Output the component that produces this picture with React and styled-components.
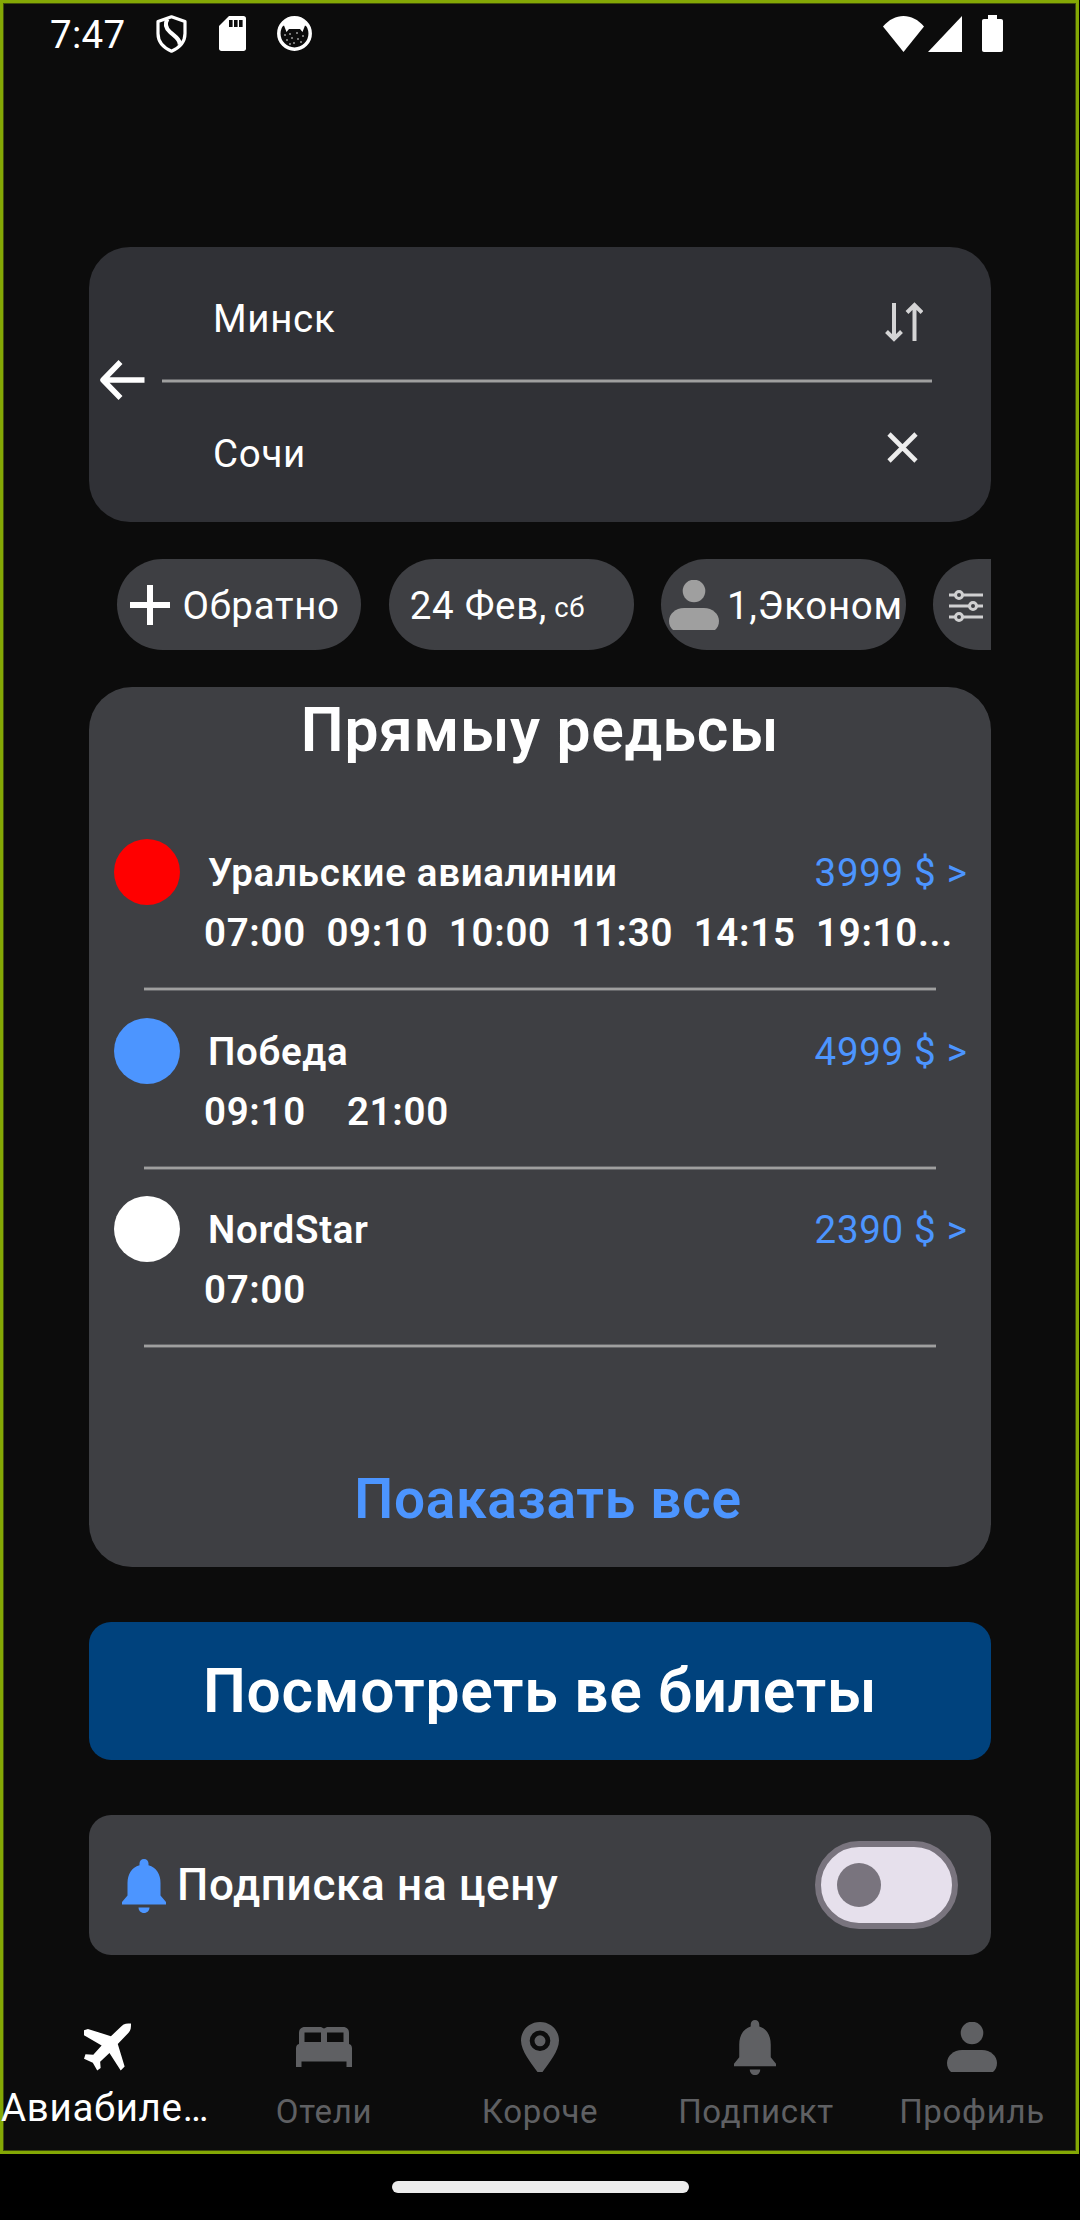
import React from "react";
import styled, { createGlobalStyle } from "styled-components";

const Global = createGlobalStyle`
  * { box-sizing: border-box; }
  body { margin: 0; background: #000; font-family: Roboto, "Noto Sans", sans-serif; color: #fff; }
  svg { display: block; flex: none; }
`;

const Phone = styled.div`
  width: 1080px;
  height: 2220px;
  background: #000;
  overflow: hidden;
  letter-spacing: 0.6875px;
`;

const Screen = styled.div`
  width: 1079px;
  height: 2154px;
  background: #0c0c0c;
  box-shadow: inset 0 0 0 3px #84a805, inset 0 0 0 4px #3f4c0b;
  display: flex;
  flex-direction: column;
`;

const StatusBar = styled.header`
  height: 67px;
  padding: 0 76px 0 50px;
  display: flex;
  align-items: center;
  justify-content: space-between;
`;

const StatusGroup = styled.div`
  display: flex;
  align-items: center;
  gap: ${(p) => p.$gap}px;
`;

const Clock = styled.span`
  width: 75px;
  font-size: 38.5px;
  line-height: 44px;
  padding-top: 2px;
  letter-spacing: 0.3px;
`;

const Content = styled.main`
  width: 902px;
  margin: 180px 0 0 89px;
  display: flex;
  flex-direction: column;
`;

const SearchCard = styled.section`
  height: 275px;
  border-radius: 41px;
  background: #303136;
  display: grid;
  grid-template-columns: 73px 770px;
`;

const BackButton = styled.div`
  display: flex;
  align-items: center;
  padding: 0 0 10px 11px;
`;

const Fields = styled.div`
  display: flex;
  flex-direction: column;
`;

const Field = styled.div`
  height: ${(p) => p.$height}px;
  padding: ${(p) => p.$top}px 9px 0 51px;
  display: flex;
  align-items: center;
  justify-content: space-between;
  font-size: 38.5px;
  line-height: 66px;
`;

const SwapIcon = styled.svg`
  margin-top: 6px;
`;

const ClearIcon = styled.svg`
  margin: 0 5px 12px 0;
`;

const Line = styled.div`
  height: 4px;
  flex: none;
  width: ${(p) => p.$width || 770}px;
  background: #9f9f9f;
  border: solid #66676a;
  border-width: 1px 0;
`;

const Chips = styled.div`
  height: 91px;
  margin-top: 37px;
  padding-left: 27.5px;
  display: flex;
  gap: 27.5px;
  overflow: hidden;
`;

const Chip = styled.div`
  flex: 0 0 244.75px;
  height: 91px;
  border-radius: 46px;
  background: #3e3f43;
  padding: 1px 0 0 ${(p) => p.$left}px;
  display: flex;
  align-items: center;
  white-space: nowrap;
  font-size: 38.5px;
  gap: ${(p) => p.$gap || 0}px;
`;

const Weekday = styled.small`
  font-size: 27.5px;
  padding-top: 4px;
`;

const Tint = styled.span`
  color: ${(p) => p.$color};
  padding-top: ${(p) => p.$drop || 0}px;
`;

const Panel = styled.section`
  height: 880px;
  margin-top: 37px;
  border-radius: 43px;
  background: #3e3f43;
  display: flex;
  flex-direction: column;
`;

const Title = styled.h1`
  margin: 0;
  padding-top: 11px;
  height: 152px;
  text-align: center;
  font-size: 60.5px;
  line-height: 66px;
  font-weight: 600;
`;

const Flight = styled.article`
  height: 178.7px;
  display: flex;
  flex-direction: column;
`;

const FlightHead = styled.div`
  height: 66px;
  padding: 0 23.5px 0 25px;
  display: flex;
  align-items: center;
  font-size: 38.5px;
`;

const Dot = styled.span`
  width: 66px;
  height: 66px;
  border-radius: 50%;
  background: ${(p) => p.$color};
`;

const Airline = styled.strong`
  flex: 1;
  margin-left: 28px;
  padding-top: 1px;
  font-weight: 600;
`;

const Price = styled.span`
  padding-top: 1px;
  color: #4c95ff;
`;

const Times = styled.div`
  padding-left: 115px;
  height: 56px;
  margin-bottom: 26px;
  line-height: 56px;
  font-size: 38.5px;
  font-weight: 600;
  white-space: pre;
`;

const Divider = styled(Line)`
  margin-left: 55px;
`;

const ShowAll = styled.div`
  margin-top: 91.2px;
  padding-left: 16px;
  text-align: center;
  font-size: 55px;
  line-height: 66px;
  font-weight: 600;
  color: #4c95ff;
`;

const TicketsButton = styled.button`
  height: 138px;
  margin-top: 55px;
  padding: 2px 0 0;
  border: 0;
  border-radius: 22px;
  background: #00427d;
  color: #fff;
  font: 600 60.5px/66px Roboto, "Noto Sans", sans-serif;
  letter-spacing: 0.6875px;
`;

const Subscribe = styled.section`
  height: 140px;
  margin-top: 55px;
  border-radius: 22px;
  background: #3e3f43;
  padding: 0 33px;
  display: flex;
  align-items: center;
`;

const SubscribeLabel = styled.span`
  flex: 1;
  margin-left: 11px;
  font-size: 44px;
  font-weight: 500;
`;

const Switch = styled.span`
  width: 143px;
  height: 88px;
  border-radius: 44px;
  border: 6px solid #79747e;
  background: #e6e0ec;
  padding-left: 16px;
  display: flex;
  align-items: center;
`;

const Thumb = styled.span`
  width: 44px;
  height: 44px;
  border-radius: 50%;
  background: #79747e;
`;

const NavBar = styled.nav`
  width: 1080px;
  margin-top: 57px;
  display: flex;
`;

const NavItem = styled.div`
  width: 216px;
  flex: none;
  display: flex;
  flex-direction: column;
  align-items: center;
  color: ${(p) => (p.$active ? "#fff" : "#5f6063")};
  font-size: ${(p) => (p.$active ? 38.5 : 33)}px;
`;

const NavIcon = styled.div`
  height: 70px;
  display: flex;
  align-items: center;
  padding-right: ${(p) => p.$nudge || 0}px;
`;

const NavLabel = styled.span`
  line-height: 44px;
  width: 216px;
  text-align: ${(p) => (p.$active ? "left" : "center")};
  padding-left: ${(p) => (p.$active ? 1 : 0)}px;
  margin-top: ${(p) => (p.$active ? 4 : 8)}px;
`;

const HomeArea = styled.footer`
  height: 66px;
  display: flex;
  justify-content: center;
  padding-top: 27px;
`;

const HomeBar = styled.span`
  width: 297px;
  height: 12px;
  border-radius: 6px;
  background: #ececec;
`;

const BellIcon = ({ width, height }) => (
  <svg width={width} height={height} viewBox="0 0 44 54" preserveAspectRatio="none" fill="currentColor">
    <path d="M22 0c2.600 0 4.500 1.800 4.500 4.500v1.800C34.500 8.500 38.500 15.500 38.500 24v12.500L44 43v2.500H0V43l5.500-6.500V24C5.500 15.500 9.500 8.500 17.500 6.300V4.500C17.500 1.800 19.400 0 22 0z" />
    <path d="M16.500 48.500h11c0 3-2.300 5.500-5.500 5.500s-5.500-2.500-5.500-5.500z" />
  </svg>
);

const PersonIcon = () => (
  <svg width="50" height="50" viewBox="0 0 50 50" fill="currentColor">
    <circle cx="25" cy="11" r="11.300" />
    <path d="M15 28h20c8.500 0 15 6 15 13 0 4-1.500 7-4 9H4c-2.500-2-4-5-4-9 0-7 6.500-13 15-13z" />
  </svg>
);

const flights = [
  { color: "#ff0000", name: "Уральские авиалинии", price: "3999 $ >", times: "07:00  09:10  10:00  11:30  14:15  19:10..." },
  { color: "#4c95ff", name: "Победа", price: "4999 $ >", times: "09:10    21:00" },
  { color: "#ffffff", name: "NordStar", price: "2390 $ >", times: "07:00" },
];

export default function App() {
  return (
    <Phone>
      <Global />
      <Screen>
        <StatusBar>
          <StatusGroup $gap={31}>
            <Clock>7:47</Clock>
            <svg width="31" height="38" viewBox="0 0 31 38" fill="none" stroke="#fff" strokeWidth="3.200" strokeLinejoin="round">
              <path d="M15.500 1.800 29 6.500v12c0 8-5 14-13.500 17.700C7 32.500 2 26.500 2 18.500v-12z" />
              <path d="M11.500 4C8.500 9 9.500 13 14 17s11 8 9.500 13" strokeWidth="4" />
            </svg>
            <svg width="28" height="35" viewBox="0 0 28 35">
              <path fill="#fff" d="M11 0h14.500C27 0 28 1 28 2.500v30c0 1.500-1 2.500-2.500 2.500h-22C2 35 1 34 1 32.500V10z" />
              <path fill="#0c0c0c" d="M11 4h3.600v7H11zM16 4h3.600v7H16zM21 4h3.600v7H21z" />
            </svg>
            <svg width="35" height="35" viewBox="0 0 35 35">
              <circle cx="17.500" cy="17.500" r="15.700" fill="#0c0c0c" stroke="#fff" strokeWidth="3.500" />
              <path fill="#fff" d="M4 11C7 3 12 1 17.500 1S28 3 31 11l-3-1.500-2.500 6.500-2.500-3h-11l-2.500 3L7 9.500z" />
              <g fill="#fff">
                <circle cx="8" cy="19" r=".8" /><circle cx="13" cy="18" r=".8" /><circle cx="20" cy="17" r=".8" />
                <circle cx="26" cy="20" r=".8" /><circle cx="10" cy="24" r=".8" /><circle cx="15" cy="22" r=".8" />
                <circle cx="21" cy="23" r=".8" /><circle cx="17" cy="27" r=".8" /><circle cx="24" cy="26" r=".8" />
                <circle cx="13" cy="28" r=".8" />
              </g>
            </svg>
          </StatusGroup>
          <StatusGroup $gap={20}>
            <StatusGroup $gap={4}>
              <svg width="41" height="36" viewBox="0 0 41 36" fill="#fff">
                <path d="M20.500 36 0 10.500C6 3.500 13 0 20.500 0S35 3.500 41 10.500z" />
              </svg>
              <svg width="34" height="36" viewBox="0 0 34 36" fill="#fff">
                <path d="M34 0v36H0z" />
              </svg>
            </StatusGroup>
            <svg width="21" height="37" viewBox="0 0 21 37" fill="#fff">
              <path d="M6 0h9v4h4c1.200 0 2 .8 2 2v29c0 1.200-.8 2-2 2H2c-1.200 0-2-.8-2-2V6c0-1.200.8-2 2-2h4z" />
            </svg>
          </StatusGroup>
        </StatusBar>

        <Content>
          <SearchCard>
            <BackButton>
              <svg width="45" height="40" viewBox="0 0 45 40" fill="none" stroke="#fff" strokeWidth="5.500" strokeLinejoin="round">
                <path d="M44.500 20H3M20.500 2 3 20l17.500 18" />
              </svg>
            </BackButton>
            <Fields>
              <Field $height={132} $top={12}>
                Минск
                <SwapIcon width="38" height="40" viewBox="0 0 38 40" fill="none" stroke="#d4d4d5" strokeWidth="4">
                  <path d="M9 1v36M1.500 29.500 9 37l7.500-7.500" />
                  <path d="M29.500 39V3M22 10.500 29.500 3l7.500 7.500" />
                </SwapIcon>
              </Field>
              <Line />
              <Field $height={139} $top={2}>
                Сочи
                <ClearIcon width="31" height="31" viewBox="0 0 31 31" fill="none" stroke="#ededed" strokeWidth="4.600">
                  <path d="m2 2 27 27M29 2 2 29" />
                </ClearIcon>
              </Field>
            </Fields>
          </SearchCard>

          <Chips>
            <Chip $left={13} $gap={13}>
              <svg width="40" height="40" viewBox="0 0 40 40" stroke="#fff" strokeWidth="6">
                <path d="M20 0v40M0 20h40" />
              </svg>
              Обратно
            </Chip>
            <Chip $left={21} $gap={7}>
              24 Фев, <Weekday>сб</Weekday>
            </Chip>
            <Chip $left={8} $gap={8}>
              <Tint $color="#9f9f9f"><PersonIcon /></Tint>
              1,Эконом
            </Chip>
            <Chip $left={16}>
              <Tint $drop={2}>
                <svg width="34" height="32" viewBox="0 0 34 32" fill="#3e3f43" stroke="#d0d0d1" strokeWidth="3">
                  <path d="M0 5h34M0 16h34M0 27h34" />
                  <circle cx="10" cy="5" r="3.500" /><circle cx="24" cy="16" r="3.500" /><circle cx="10" cy="27" r="3.500" />
                </svg>
              </Tint>
            </Chip>
          </Chips>

          <Panel>
            <Title>Прямыу редьсы</Title>
            {flights.map((f) => (
              <Flight key={f.name}>
                <FlightHead>
                  <Dot $color={f.color} />
                  <Airline>{f.name}</Airline>
                  <Price>{f.price}</Price>
                </FlightHead>
                <Times>{f.times}</Times>
                <Divider $width={792} />
              </Flight>
            ))}
            <ShowAll>Поаказать все</ShowAll>
          </Panel>

          <TicketsButton>Посмотреть ве билеты</TicketsButton>

          <Subscribe>
            <Tint $color="#4c95ff" $drop={2}><BellIcon width={44} height={54} /></Tint>
            <SubscribeLabel>Подписка на цену</SubscribeLabel>
            <Switch><Thumb /></Switch>
          </Subscribe>
        </Content>

        <NavBar>
          <NavItem $active>
            <NavIcon $nudge={2}>
              <svg width="47" height="48" viewBox="0 0 48 48" fill="#fff">
                <path d="M38.500 2.500C41 0 44 0 48 0c0 4 0 7-2.500 9.500L34.500 21l7 23-4 4L26 30l-9.500 9 .5 6.500-3.500 2.500L9 40l-9-4 1.500-4.500 8 .5L18 22.500 0 12V7l4-1.500L27.500 13z" />
              </svg>
            </NavIcon>
            <NavLabel $active>Авиабиле…</NavLabel>
          </NavItem>
          <NavItem>
            <NavIcon>
              <svg width="56" height="40" viewBox="0 0 56 40" fill="currentColor" fillRule="evenodd">
                <path d="M9 0h16l3 1.500L31 0h16c4 0 6 2.500 6 6v11c2 .5 3 2 3 4.500V40h-5.500v-5.500h-45V40H0V21.500C0 19 1 17.500 3 17V6c0-3.500 2-6 6-6zM8.500 5.500v9.500H25V5.500zM31 5.500v9.500h16.500V5.500z" />
              </svg>
            </NavIcon>
            <NavLabel>Отели</NavLabel>
          </NavItem>
          <NavItem>
            <NavIcon>
              <svg width="38" height="50" viewBox="0 0 38 50" fill="currentColor" fillRule="evenodd">
                <path d="M19 0c10.500 0 19 8 19 18.500C38 29 28 41 21.500 50h-5C10 41 0 29 0 18.500 0 8 8.500 0 19 0zm0 8.500a10.300 10.300 0 1 0 0 20.600 10.300 10.300 0 0 0 0-20.600z" />
                <circle cx="19" cy="18.800" r="5.500" />
              </svg>
            </NavIcon>
            <NavLabel>Короче</NavLabel>
          </NavItem>
          <NavItem>
            <NavIcon $nudge={2}><BellIcon width={42} height={55} /></NavIcon>
            <NavLabel>Подпискт</NavLabel>
          </NavItem>
          <NavItem>
            <NavIcon><PersonIcon /></NavIcon>
            <NavLabel>Профиль</NavLabel>
          </NavItem>
        </NavBar>
      </Screen>
      <HomeArea><HomeBar /></HomeArea>
    </Phone>
  );
}
